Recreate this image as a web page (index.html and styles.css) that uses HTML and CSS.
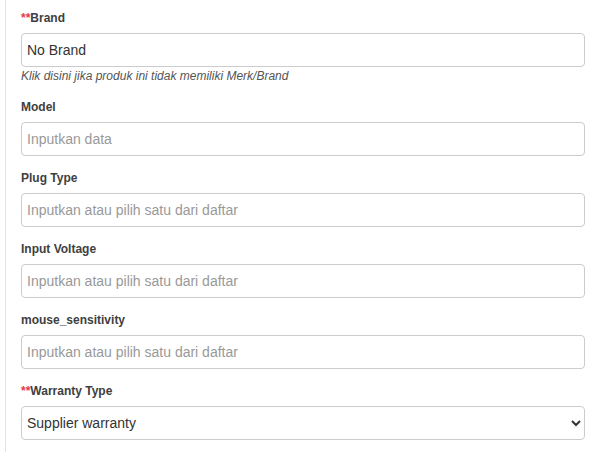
FILE: index.html
```html
<!DOCTYPE html>
<html>
<head>
<title>Atribut Produk</title>
<link rel="stylesheet" href="styles.css">
</head>
<body>
  <div class="panel">
    <div class="form-group">
      <label for="brand"><span class="req">**</span>Brand</label>
      <input type="text" id="brand" class="form-control" value="No Brand">
      <span class="help-block">Klik disini jika produk ini tidak memiliki Merk/Brand</span>
    </div>
    <div class="form-group">
      <label for="model">Model</label>
      <input type="text" id="model" class="form-control" placeholder="Inputkan data">
    </div>
    <div class="form-group">
      <label for="plug">Plug Type</label>
      <input type="text" id="plug" class="form-control" placeholder="Inputkan atau pilih satu dari daftar">
    </div>
    <div class="form-group">
      <label for="voltage">Input Voltage</label>
      <input type="text" id="voltage" class="form-control" placeholder="Inputkan atau pilih satu dari daftar">
    </div>
    <div class="form-group">
      <label for="sensitivity">mouse_sensitivity</label>
      <input type="text" id="sensitivity" class="form-control" placeholder="Inputkan atau pilih satu dari daftar">
    </div>
    <div class="form-group">
      <label for="warranty"><span class="req">**</span>Warranty Type</label>
      <select id="warranty" class="form-control">
        <option>Supplier warranty</option>
        <option>Distributor warranty</option>
        <option>No warranty</option>
      </select>
    </div>
  </div>
</body>
</html>
```

FILE: styles.css
```css
body {
  margin: 0;
  font-family: "Liberation Sans", Arial, sans-serif;
  color: #333;
  background: #fff;
}
.panel {
  margin-left: 5px;
  border-left: 1px solid #e3e3e3;
  padding: 10px 13px 12px 15px;
}
.form-group {
  margin-bottom: 14px;
}
label {
  display: block;
  font-size: 12px;
  font-weight: bold;
  line-height: 17px;
  margin-bottom: 6px;
  color: #404040;
}
.req {
  color: #e8374f;
}
.form-control {
  display: block;
  width: 100%;
  height: 34px;
  padding: 6px 5px;
  font-family: inherit;
  font-size: 14px;
  color: #333;
  background-color: #fff;
  border: 1px solid #ccc;
  border-radius: 4px;
  box-sizing: border-box;
}
.form-control::placeholder {
  color: #999;
}
select.form-control {
  padding: 6px 1px;
}
.help-block {
  display: block;
  font-size: 12px;
  font-style: italic;
  line-height: 17px;
  color: #555;
  margin-top: 1px;
}
```
